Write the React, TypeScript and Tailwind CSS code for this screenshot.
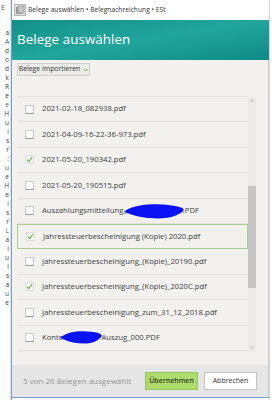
import { ReactNode } from "react";

type Row = { name: ReactNode; checked?: boolean; active?: boolean };

const Blob = ({ w, h, span }: { w: number; h: number; span: number }) => (
  <span className="relative inline-block align-middle" style={{ width: span }}>
    <svg
      className="absolute -left-[3px] -top-[8px]"
      width={w}
      height={h}
      viewBox={`0 0 ${w} ${h}`}
    >
      <path
        d={`M2 ${h * 0.45} C ${w * 0.2} ${h * 0.1}, ${w * 0.5} 0, ${w * 0.8} ${h * 0.15} S ${w} ${h * 0.55}, ${w * 0.85} ${h * 0.8} S ${w * 0.35} ${h}, ${w * 0.15} ${h * 0.75} S 0 ${h * 0.55}, 2 ${h * 0.45} Z`}
        fill="#0a12f5"
      />
    </svg>
  </span>
);

const rows: Row[] = [
  { name: "2021-02-18_082938.pdf" },
  { name: "2021-04-09-16-22-36-973.pdf" },
  { name: "2021-05-20_190342.pdf", checked: true },
  { name: "2021-05-20_190515.pdf" },
  {
    name: (
      <>
        Auszahlungsmitteilung_
        <Blob w={60} h={16} span={56} />
        .PDF
      </>
    ),
  },
  { name: "Jahressteuerbescheinigung (Kopie) 2020.pdf", checked: true, active: true },
  { name: "Jahressteuerbescheinigung_(Kopie)_20190.pdf" },
  { name: "Jahressteuerbescheinigung_(Kopie)_2020C.pdf", checked: true },
  { name: "Jahressteuerbescheinigung_zum_31_12_2018.pdf" },
  {
    name: (
      <>
        Konto
        <Blob w={42} h={14} span={38} />
        Auszug_000.PDF
      </>
    ),
  },
];

const stripChars = "aAdodkReeHuisr:ueHeisrLaiuisaue";

function Checkbox({ checked }: { checked?: boolean }) {
  if (checked) {
    return (
      <span className="flex h-[9px] w-[9px] shrink-0 items-center justify-center border border-[#dcdcdc] bg-[#f7f7f7]">
        <svg width="9" height="9" viewBox="0 0 9 9">
          <path d="M1.3 4.6 L3.6 7.2 L7.9 1.2" fill="none" stroke="#5fb534" strokeWidth="1.3" />
        </svg>
      </span>
    );
  }
  return (
    <span className="h-[9px] w-[9px] shrink-0 border border-[#c8c8c8] border-b-[#9c9c9c] bg-white" />
  );
}

export default function App() {
  return (
    <div className="flex h-[400px] w-[272px] overflow-hidden bg-white font-['Open_Sans',sans-serif]">
      {/* background app behind the dialog */}
      <div className="flex w-[11px] flex-col overflow-hidden border-r border-[#e4e4e4] bg-white">
        <div className="h-[20px] pl-[1px] text-[7px] leading-[16px] text-[#555]">E</div>
        <div className="mt-[8px] flex flex-col items-end pr-[1px] text-[6.5px] leading-[9px] text-[#3a3a3a]">
          {stripChars.split("").map((c, i) => (
            <span key={i} className={i % 7 === 1 ? "text-[#2b5d9a]" : ""}>
              {c}
            </span>
          ))}
        </div>
      </div>

      <div className="flex w-[258px] flex-col border-l border-[#6f9fd3]">
        {/* title bar */}
        <div className="flex h-[20px] items-center gap-[2px] bg-white pl-[2px]">
          <svg width="12" height="12" viewBox="0 0 12 12">
            <rect x="0.5" y="0.5" width="11" height="11" fill="#e2e2e2" stroke="#b5b5b5" />
            <rect x="2" y="3" width="6" height="7" fill="#9a9a9a" />
            <rect x="4" y="2" width="6" height="7" fill="#c7c7c7" stroke="#8a8a8a" strokeWidth="0.6" />
          </svg>
          <span className="text-[6.7px] text-[#333]">
            Belege auswählen • Belegnachreichung • ESt
          </span>
        </div>

        {/* teal header */}
        <div className="flex h-[40px] items-center bg-gradient-to-br from-[#139089] via-[#21a59c] to-[#0e8a84] pl-[5px]">
          <h1 className="text-[13.3px] tracking-[0.1px] text-white">Belege auswählen</h1>
        </div>

        {/* content */}
        <div className="flex flex-1 flex-col border-r border-[#cfcfcf] bg-[#f2f1ee] pl-[5px] pt-[3px]">
          <button className="flex h-[13px] w-[73px] items-center justify-center gap-[3px] border border-[#cfcfcf] bg-[#ebebea] text-[6.9px] text-[#333]">
            Belege importieren
            <svg width="5" height="4" viewBox="0 0 5 4">
              <path d="M0.5 1 L2.5 3 L4.5 1" fill="none" stroke="#6bb53a" strokeWidth="1" />
            </svg>
          </button>

          <div className="mt-[20px] flex">
            <div className="w-[231px] border-t border-[#e2e1de]">
              {rows.map((r, i) => (
                <div
                  key={i}
                  className={`flex h-[25.4px] items-center gap-[8px] pl-[8px] text-[7.7px] text-[#404040] ${
                    r.active ? "border border-[#a9d18e] pl-[7px]" : "border-b border-[#e2e1de]"
                  }`}
                >
                  <Checkbox checked={r.checked} />
                  <span className="whitespace-nowrap">{r.name}</span>
                </div>
              ))}
            </div>
            <div className="mt-[1px] flex h-[255px] w-[8px] flex-col items-center bg-[#eaeaea]">
              <span className="h-[8px] text-[6px] leading-[8px] text-[#999]">˄</span>
              <div className="mt-[81px] h-[102px] w-[8px] bg-[#c6c6c6]" />
              <span className="mt-auto h-[8px] text-[6px] leading-[8px] text-[#999]">˅</span>
            </div>
          </div>
        </div>

        {/* footer */}
        <div className="flex h-[32px] items-center border-r border-[#cfcfcf] bg-[#e6e6e6] pl-[11px] pr-[11px]">
          <span className="text-[8px] text-[#939393]">5 von 26 Belegen ausgewählt</span>
          <div className="ml-auto flex gap-[6px]">
            <button className="h-[18px] w-[53px] border border-[#93c65a] bg-[#addc6c] text-[7px] font-semibold text-[#2f3a25]">
              Übernehmen
            </button>
            <button className="h-[18px] w-[53px] border border-[#c4c4c4] bg-white text-[7px] text-[#333]">
              Abbrechen
            </button>
          </div>
        </div>
        <div className="h-[3px] border-t border-[#6f9fd3] bg-white" />
      </div>

      <div className="w-[3px] border-l border-[#d6d6d6] bg-white" />
    </div>
  );
}
